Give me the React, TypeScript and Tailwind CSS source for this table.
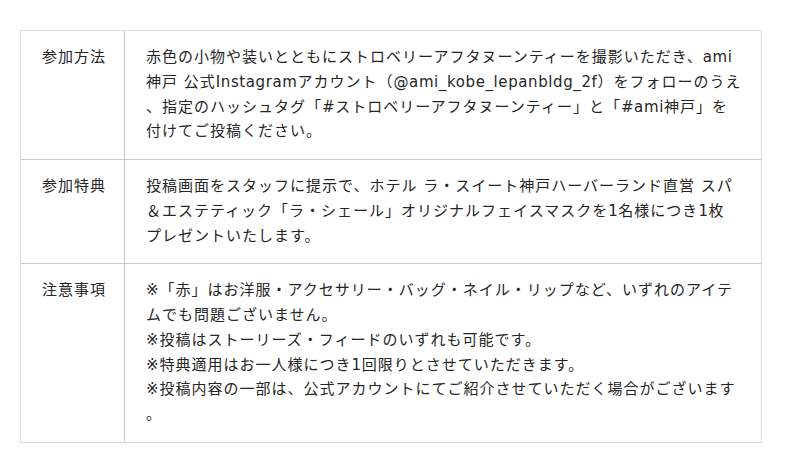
import React from "react";

type Row = {
  label: string;
  lines: string[];
};

const rows: Row[] = [
  {
    label: "参加方法",
    lines: [
      "赤色の小物や装いとともにストロベリーアフタヌーンティーを撮影いただき、ami",
      "神戸 公式Instagramアカウント（@ami_kobe_lepanbldg_2f）をフォローのうえ",
      "、指定のハッシュタグ「#ストロベリーアフタヌーンティー」と「#ami神戸」を",
      "付けてご投稿ください。",
    ],
  },
  {
    label: "参加特典",
    lines: [
      "投稿画面をスタッフに提示で、ホテル ラ・スイート神戸ハーバーランド直営 スパ",
      "＆エステティック「ラ・シェール」オリジナルフェイスマスクを1名様につき1枚",
      "プレゼントいたします。",
    ],
  },
  {
    label: "注意事項",
    lines: [
      "※「赤」はお洋服・アクセサリー・バッグ・ネイル・リップなど、いずれのアイテ",
      "ムでも問題ございません。",
      "※投稿はストーリーズ・フィードのいずれも可能です。",
      "※特典適用はお一人様につき1回限りとさせていただきます。",
      "※投稿内容の一部は、公式アカウントにてご紹介させていただく場合がございます",
      "。",
    ],
  },
];

// latin runs sit a bit tighter than the japanese text
const renderLine = (line: string) =>
  line.split(/([A-Za-z0-9@_#]+)/).map((part, k) =>
    /^[A-Za-z0-9@_#]+$/.test(part) ? (
      <span key={k} className="tracking-[0.6px]">
        {part}
      </span>
    ) : (
      part
    )
  );

export default function App() {
  return (
    <div
      className="w-[800px] h-[473px] bg-white pt-[30px] pl-5"
      style={{ fontFamily: '"DejaVu Sans", "Noto Sans CJK JP", sans-serif' }}
    >
      <div className="w-[742px] border border-[#dcdcdc] text-[15px] leading-[24.75px] tracking-[1px] text-[#262626]">
        {rows.map((row, i) => (
          <div
            key={row.label}
            className={`flex ${i > 0 ? "border-t border-[#c8c8c8]" : ""}`}
          >
            <div className="w-[104px] shrink-0 border-r border-[#c8c8c8] pl-[21px] pt-[14px] pb-[15px]">
              {row.label}
            </div>
            <div className="flex-1 pl-[21px] pt-[14px] pb-[15px]">
              {row.lines.map((line, j) => (
                <div key={j} className="whitespace-nowrap">
                  {renderLine(line)}
                </div>
              ))}
            </div>
          </div>
        ))}
      </div>
    </div>
  );
}
